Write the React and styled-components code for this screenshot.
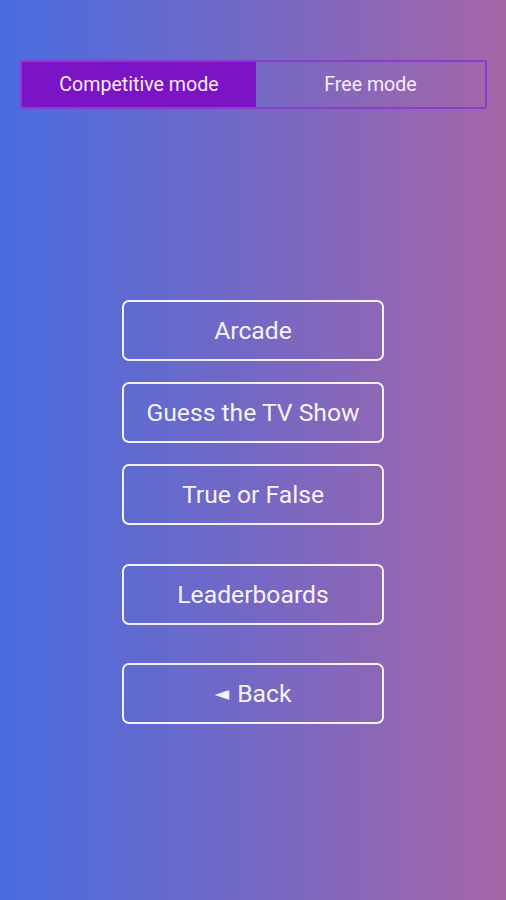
import React from 'react'
import styled, {createGlobalStyle} from 'styled-components'

const Global = createGlobalStyle`
  html, body {
    margin: 0;
    padding: 0;
  }
  body {
    font-family: Roboto, "Noto Sans", "Liberation Sans", sans-serif;
  }
`

const Screen = styled.div`
  min-height: 900px;
  width: 100%;
  box-sizing: border-box;
  padding: 60px 19px 0 20px;
  display: flex;
  flex-direction: column;
  background: linear-gradient(90deg, #496ce0 0%, #7468c4 50%, #a666a8 100%);
`

const Tabs = styled.div`
  display: grid;
  grid-template-columns: 234px 1fr;
  height: 49px;
  box-sizing: border-box;
  border: 2px solid #8a3ccf;
  border-radius: 3px;
  overflow: hidden;
`

const Tab = styled.div`
  display: flex;
  align-items: center;
  justify-content: center;
  color: #f4ecfb;
  font-size: 19.6px;
  background: ${p => (p.$active ? '#7a14c4' : 'transparent')};
`

const Menu = styled.div`
  display: flex;
  flex-direction: column;
  align-items: center;
  margin-top: 191px;
  margin-right: 1px;
`

const MenuButton = styled.button`
  width: 262px;
  height: 61px;
  box-sizing: border-box;
  border: 2px solid #f4f0fa;
  border-radius: 7px;
  background: transparent;
  color: #f6f2fb;
  font-family: inherit;
  font-size: 24.7px;
  margin-top: ${p => p.$gap || 0}px;
  display: flex;
  align-items: center;
  justify-content: center;
  gap: 8px;
`

const Arrow = styled.span`
  font-size: 19px;
  line-height: 1;
  font-family: "DejaVu Sans", sans-serif;
`

export default function App() {
  return (
    <Screen>
      <Global />
      <Tabs>
        <Tab $active>Competitive mode</Tab>
        <Tab>Free mode</Tab>
      </Tabs>
      <Menu>
        <MenuButton>Arcade</MenuButton>
        <MenuButton $gap={21}>Guess the TV Show</MenuButton>
        <MenuButton $gap={21}>True or False</MenuButton>
        <MenuButton $gap={39}>Leaderboards</MenuButton>
        <MenuButton $gap={38}><Arrow>◄</Arrow>Back</MenuButton>
      </Menu>
    </Screen>
  )
}
